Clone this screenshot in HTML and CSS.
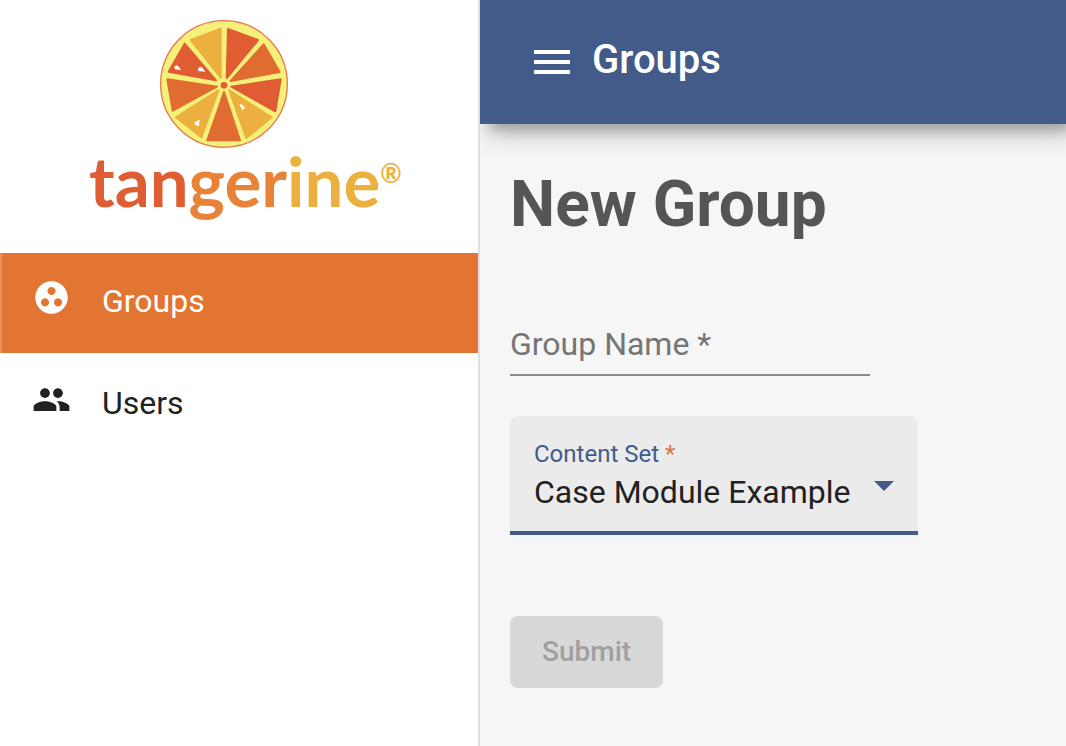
FILE: index.html
```html
<!DOCTYPE html>
<html lang="en">
<head>
<meta charset="utf-8">
<meta name="viewport" content="width=device-width, initial-scale=1">
<title>Tangerine - New Group</title>
<link rel="stylesheet" href="styles.css">
</head>
<body>
<div class="layout">
  <aside class="sidebar">
    <a class="logo" href="#" aria-label="Tangerine home">
      <svg class="logo-fruit" viewBox="30 29 384 384" aria-hidden="true">
        <circle cx="222" cy="221" r="190" fill="#f5f07a" stroke="#e67a4a" stroke-width="4"/>
        <g stroke-width="6" stroke-linejoin="round">
          <g fill="#e05c33" stroke="#e05c33">
            <path d="M234 56L324 89L230 203Z"/>
            <path d="M104 100L198 210L56 184Z"/>
            <path d="M392 207L376 303L244 229Z"/>
          </g>
          <g fill="#e16c31" stroke="#e16c31">
            <path d="M341 102L389 185L242 212Z"/>
            <path d="M52 207L201 229L68 301Z"/>
            <path d="M222 245L270 390H172Z"/>
          </g>
          <g fill="#ecb03f" stroke="#ecb03f">
            <path d="M212 55V202L122 89Z"/>
            <path d="M205 240L154 381L78 321Z"/>
            <path d="M238 240L365 321L289 383Z"/>
          </g>
        </g>
        <circle cx="222" cy="225" r="10" fill="#e05c33"/>
        <g fill="#fff">
          <path d="M73 170Q78 161 84 167L94 179L75 177Z"/>
          <path d="M144 175Q150 166 157 172L166 184L145 182Z"/>
          <path d="M268 281Q276 281 280 287L286 292L276 299Z"/>
          <path d="M149 327L147 346Q139 348 133 340Q133 335 140 333Z"/>
        </g>
      </svg>
      <span class="wordmark"><span class="tone-red">tan</span><span class="tone-orange">ger</span><span class="tone-yellow">ine<sup>®</sup></span></span>
    </a>
    <nav class="nav">
      <a class="nav-item active" href="#">
        <svg class="nav-icon" viewBox="0 0 24 24" aria-hidden="true"><path d="M12 2C6.480 2 2 6.480 2 12s4.480 10 10 10 10-4.480 10-10S17.520 2 12 2zM8 17.500c-1.380 0-2.500-1.120-2.500-2.500s1.120-2.500 2.500-2.500 2.500 1.120 2.500 2.500-1.120 2.500-2.500 2.500zM9.500 8c0-1.380 1.120-2.500 2.500-2.500s2.500 1.120 2.500 2.500-1.120 2.500-2.500 2.500S9.500 9.380 9.500 8zm6.500 9.500c-1.380 0-2.500-1.120-2.500-2.500s1.120-2.500 2.500-2.500 2.500 1.120 2.500 2.500-1.120 2.500-2.500 2.500z"/></svg>
        <span>Groups</span>
      </a>
      <a class="nav-item" href="#">
        <svg class="nav-icon" viewBox="0 0 24 24" aria-hidden="true"><path d="M16 11c1.660 0 2.990-1.340 2.990-3S17.660 5 16 5s-3 1.340-3 3 1.340 3 3 3zm-8 0c1.660 0 2.990-1.340 2.990-3S9.660 5 8 5 5 6.340 5 8s1.340 3 3 3zm0 2c-2.330 0-7 1.170-7 3.500V19h14v-2.500c0-2.330-4.670-3.500-7-3.500zm8 0c-.29 0-.62.020-.97.050 1.160.84 1.970 1.970 1.970 3.450V19h6v-2.500c0-2.330-4.670-3.500-7-3.500z"/></svg>
        <span>Users</span>
      </a>
    </nav>
  </aside>
  <div class="content">
    <header class="toolbar">
      <button class="menu-button" type="button" aria-label="Toggle menu">
        <svg viewBox="0 0 24 24" aria-hidden="true"><path d="M3 18h18v-2H3v2zm0-5h18v-2H3v2zm0-7v2h18V6H3z"/></svg>
      </button>
      <span class="toolbar-title">Groups</span>
    </header>
    <main class="page">
      <h1>New Group</h1>
      <form class="form">
        <div class="text-field">
          <input id="group-name" type="text" placeholder=" " required>
          <label for="group-name">Group Name *</label>
        </div>
        <div class="select-field">
          <label for="content-set">Content Set <span class="required">*</span></label>
          <select id="content-set" required>
            <option>Case Module Example</option>
          </select>
          <svg class="arrow" viewBox="0 0 20 10" aria-hidden="true"><path d="M0 0h20L10 10z"/></svg>
        </div>
        <button class="submit" type="submit" disabled>Submit</button>
      </form>
    </main>
  </div>
</div>
</body>
</html>
```

FILE: styles.css
```css
* { box-sizing: border-box; }

body {
  margin: 0;
  background: #f6f6f6;
  color: #212121;
  font-family: Roboto, "Liberation Sans", sans-serif;
  font-size: 32px;
}

.layout { display: flex; min-height: 100vh; }

.sidebar {
  flex: none;
  width: 480px;
  border-right: 2px solid #e0e0e0;
  background: #fff;
}

.logo {
  display: flex;
  flex-direction: column;
  align-items: flex-start;
  height: 253px;
  padding: 20px 0 0 89px;
  text-decoration: none;
}

.logo-fruit { width: 128px; height: 128px; margin-left: 71px; }

.wordmark {
  display: flex;
  font-family: Lato, sans-serif;
  font-size: 69px;
  font-weight: 700;
  line-height: 66px;
}

.wordmark sup {
  font-size: 26px;
  line-height: 26px;
  vertical-align: 24px;
}

.tone-red { color: #e05c33; }
.tone-orange { color: #e78236; }
.tone-yellow { color: #ecb03f; }

.nav { display: flex; flex-direction: column; gap: 2px; }

.nav-item {
  display: flex;
  align-items: center;
  gap: 31px;
  height: 100px;
  padding: 0 30px 4px;
  border-left: 2px solid transparent;
  color: #212121;
  text-decoration: none;
}

.nav-item.active {
  border-left-color: #e68f5c;
  background: #e27532;
  color: #fff;
}

.nav-icon { width: 39px; height: 39px; margin-bottom: 8px; fill: currentColor; }

.content { flex: 1; min-width: 0; overflow: hidden; }

.toolbar {
  display: flex;
  align-items: center;
  gap: 16px;
  height: 124px;
  padding: 0 48px;
  background: #435b89;
  box-shadow: 8px 8px 12px -2px rgba(0, 0, 0, .24), 8px 12px 24px rgba(0, 0, 0, .18);
  color: #fff;
}

.menu-button {
  width: 48px;
  height: 48px;
  padding: 0;
  border: 0;
  background: none;
  color: inherit;
}

.menu-button svg { display: block; fill: currentColor; }

.toolbar-title { padding-bottom: 6px; font-size: 40px; font-weight: 500; }

.page { padding: 43px 30px; }

h1 {
  margin: 0;
  color: #555;
  font-size: 64px;
  font-weight: 700;
  line-height: 76px;
}

.form {
  display: flex;
  flex-direction: column;
  align-items: flex-start;
  padding-top: 73px;
}

.text-field {
  position: relative;
  width: 360px;
  max-width: 100%;
  margin-bottom: 40px;
}

.text-field input {
  display: block;
  width: 100%;
  height: 60px;
  padding: 0 0 6px;
  border: 0;
  border-bottom: 2px solid #8c8c8c;
  outline: 0;
  background: none;
  color: inherit;
  font: inherit;
}

.text-field label {
  position: absolute;
  top: 8px;
  left: 0;
  color: #757575;
  line-height: 40px;
  pointer-events: none;
}

.text-field input:focus + label,
.text-field input:not(:placeholder-shown) + label {
  top: -20px;
  font-size: 24px;
  line-height: 28px;
}

.select-field {
  position: relative;
  display: flex;
  flex-direction: column;
  width: 408px;
  max-width: 100%;
  margin-bottom: 81px;
  padding: 24px 24px 15px;
  border-bottom: 4px solid #435b89;
  border-radius: 8px 8px 0 0;
  background: #ebebeb;
}

.select-field label {
  color: #435b89;
  font-size: 24px;
  line-height: 28px;
}

.required { color: #e27532; }

.select-field select {
  width: 100%;
  height: 48px;
  padding: 0 32px 0 0;
  border: 0;
  outline: 0;
  appearance: none;
  background: none;
  color: #212121;
  font: inherit;
}

.arrow {
  position: absolute;
  top: 65px;
  right: 24px;
  width: 20px;
  height: 10px;
  fill: #435b89;
  pointer-events: none;
}

.submit {
  height: 72px;
  padding: 0 32px 2px;
  border: 0;
  border-radius: 8px;
  background: #d8d8d8;
  color: #a0a0a0;
  font: 500 28px Roboto, "Liberation Sans", sans-serif;
}
```
